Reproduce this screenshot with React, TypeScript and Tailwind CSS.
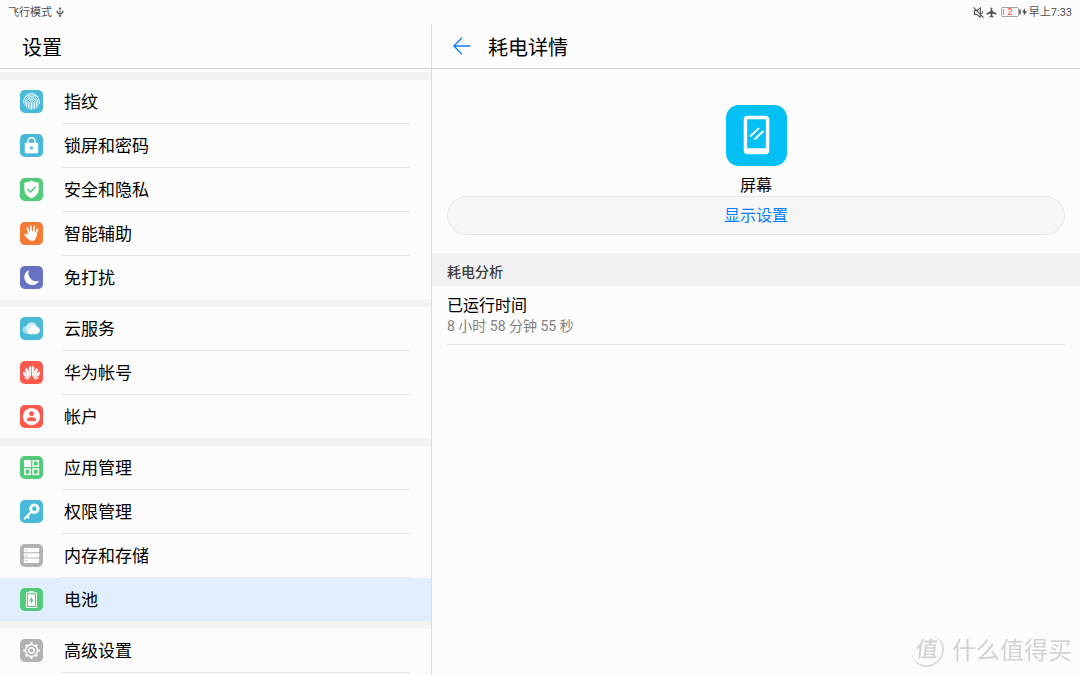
import { useState } from "react";
import type { ReactNode } from "react";

interface Item {
  label: string;
  color: string;
  icon: ReactNode;
}

const groups: Item[][] = [
  [
    { label: "指纹", color: "#48bad8", icon: <Fingerprint /> },
    { label: "锁屏和密码", color: "#48bad8", icon: <Lock /> },
    { label: "安全和隐私", color: "#50cb79", icon: <Shield /> },
    { label: "智能辅助", color: "#f57a34", icon: <Hand /> },
    { label: "免打扰", color: "#6772c3", icon: <Moon /> },
  ],
  [
    { label: "云服务", color: "#48bad8", icon: <Cloud /> },
    { label: "华为帐号", color: "#fd5a4e", icon: <Flower /> },
    { label: "帐户", color: "#fd5a4e", icon: <Account /> },
  ],
  [
    { label: "应用管理", color: "#50cb79", icon: <Apps /> },
    { label: "权限管理", color: "#48bad8", icon: <Key /> },
    { label: "内存和存储", color: "#b2b2b2", icon: <Storage /> },
    { label: "电池", color: "#50cb79", icon: <Battery /> },
  ],
  [{ label: "高级设置", color: "#b2b2b2", icon: <Gear /> }],
];

function Fingerprint() {
  return (
    <g fill="none" stroke="#fff" strokeWidth="0.9" strokeLinecap="round">
      <path d="M5.2 7.4C6.6 5 9 3.6 12 3.6s5.4 1.4 6.8 3.8" />
      <path d="M3.8 13.5v-1.6C4 8 7.6 5.2 12 5.2S20 8 20.2 11.9v2.2" />
      <path d="M5.4 16v-4c.2-3 3-5.2 6.6-5.2s6.4 2.2 6.600 5.2v4.8" />
      <path d="M7 17.8V12.2c.2-2.2 2.3-3.8 5-3.8s4.8 1.6 5 3.8v6" />
      <path d="M8.7 19v-6.6c.2-1.4 1.5-2.4 3.3-2.4s3.1 1 3.3 2.4v6.8" />
      <path d="M10.4 19.8v-6.900c0-.8.7-1.300 1.600-1.300s1.600.5 1.600 1.300v7" />
      <path d="M12 13.400v6.800" />
    </g>
  );
}

function Lock() {
  return (
    <>
      <path d="M8.3 9.5V7.6a3.7 3.7 0 0 1 7.4 0v1.900" fill="none" stroke="#fff" strokeWidth="1.5" />
      <rect x="5" y="9" width="14" height="11" rx="1" fill="#fff" />
      <circle cx="12" cy="14.4" r="1.7" fill="#48bad8" />
    </>
  );
}

function Shield() {
  return (
    <>
      <path d="M12 2.7c2 1.3 4.6 2 7.5 2.2v6.6c0 4.600-3 7.700-7.500 9.800-4.500-2.100-7.500-5.200-7.500-9.800V4.900C7.400 4.700 10 4 12 2.700z" fill="#fff" />
      <path d="m7.7 11.5 3.2 3.2 5.6-5.6" fill="none" stroke="#50cb79" strokeWidth="1.5" />
    </>
  );
}

function Hand() {
  return (
    <g stroke="#fff" strokeLinecap="round" fill="#fff">
      <path d="M9.3 11.5 7.7 6.200M11.700 10.500l-.6-6.100M14.300 10.500l.6-5.700M16.600 12l1.700-4.400" strokeWidth="1.8" />
      <path d="M8.6 10.800c3-.9 6.300-.7 8.800.4-.2 2.500-.7 4.700-1.900 6.700-.9 1.500-3.500 1.800-5.200.6-1.800-1.300-3.700-3-5.300-4.700-.5-.7.200-1.300 1-1.100l2.800 1.200z" strokeWidth="1" strokeLinejoin="round" />
    </g>
  );
}

function Moon() {
  return <path d="M9.500 4.100A8.200 8.200 0 1 0 20 15.400 8.400 8.400 0 0 1 9.500 4.100z" fill="#fff" />;
}

function Cloud() {
  return (
    <>
      <path d="M7 17.500a4 4 0 0 1-.3-8 5.600 5.600 0 0 1 10.600-.8v8.800z" fill="#a5dcea" />
      <circle cx="12" cy="11.800" r="5.500" fill="#d9f0f6" />
      <path d="M10.500 17.900a2.600 2.600 0 0 1 .2-5.200 5 5 0 0 1 5-3c3 0 5 1.900 5 4.200 0 2.300-1.800 4-4.200 4z" fill="#fff" />
    </>
  );
}

function Flower() {
  return (
    <g fill="#fff">
      <path d="M11.500 16.800C9.300 13 8.600 8 9.600 6c.9-1.100 2-.6 2.100.8z" />
      <path d="M12.500 16.800c2.200-3.800 2.900-8.800 1.900-10.800-.9-1.100-2-.6-2.100.8z" />
      <path d="M10.700 17.200C7 14.600 5 10.500 5.600 8.500c.7-1.300 1.900-.9 2.500.3 1.100 2.300 2.200 5.300 2.600 8.400z" />
      <path d="M13.300 17.200c3.700-2.600 5.700-6.700 5.100-8.700-.7-1.300-1.900-.9-2.500.3-1.100 2.300-2.200 5.300-2.600 8.400z" />
      <path d="M10.100 17.900C6 17.300 2.800 14.500 3 12.300c.4-1.300 1.400-1.200 2.300-.4 1.900 1.700 3.600 3.700 4.800 6z" />
      <path d="M13.900 17.900c4.100-.6 7.300-3.400 7.100-5.600-.4-1.300-1.400-1.200-2.300-.4-1.900 1.700-3.600 3.700-4.800 6z" />
      <path d="M9.900 18.600c-2.600 1.300-4.900.3-5.500-1.800 2 .2 3.800.8 5.500 1.800z" />
      <path d="M14.100 18.600c2.600 1.300 4.900.3 5.500-1.800-2 .2-3.800.8-5.500 1.800z" />
    </g>
  );
}

function Account() {
  return (
    <>
      <circle cx="12" cy="12" r="9" fill="#fff" />
      <circle cx="12" cy="9.200" r="2.600" fill="#fd5a4e" />
      <path d="M7.300 16.700v-1.300c0-1.700 1.500-2.700 3-2.700h3.400c1.500 0 3 1 3 2.700v1.300z" fill="#fd5a4e" />
    </>
  );
}

function Apps() {
  return (
    <>
      <rect x="4.2" y="4.2" width="7.4" height="7.4" rx="0.6" fill="#fff" />
      <g fill="none" stroke="#fff" strokeWidth="1.5">
        <rect x="13.6" y="5" width="5.6" height="5.6" />
        <rect x="5" y="13.6" width="5.6" height="5.6" />
        <rect x="13.6" y="13.6" width="5.6" height="5.6" />
      </g>
    </>
  );
}

function Key() {
  return (
    <g fill="none" stroke="#fff" strokeLinecap="round">
      <circle cx="15" cy="9" r="3.9" strokeWidth="3" />
      <path d="m12 12.300-7 7M7.800 17.300l1 1" strokeWidth="2.2" />
    </g>
  );
}

function Storage() {
  return (
    <>
      {[4.2, 9.7, 15.2].map((y) => (
        <g key={y}>
          <rect x="4" y={y} width="16" height="4.5" rx="0.8" fill="#fff" />
          <rect x="6" y={y + 1.5} width="1.5" height="1.5" fill="#b2b2b2" />
        </g>
      ))}
    </>
  );
}

function Battery() {
  return (
    <>
      <path d="M9.700 3h4.600v1.600h-4.600z" fill="#fff" />
      <rect x="6.7" y="5" width="10.6" height="15.3" fill="none" stroke="#fff" />
      <rect x="8.3" y="6.6" width="7.4" height="12.1" fill="#fff" />
      <path d="m12.700 8.800-3.200 4.600h2l-.3 3.400 3.300-4.700h-2.100z" fill="#50cb79" />
    </>
  );
}

function Gear() {
  return (
    <g fill="none" stroke="#fff">
      <circle cx="12" cy="12" r="6.3" strokeWidth="1.5" />
      <circle cx="12" cy="12" r="2.9" strokeWidth="1.5" />
      <path
        d="M12 5.500v-2M12 20.500v-2M5.500 12h-2M20.500 12h-2M7.400 7.400 6 6M18 18l-1.400-1.400M16.600 7.400 18 6M6 18l1.400-1.400"
        strokeWidth="2.2"
      />
    </g>
  );
}

function StatusBar() {
  return (
    <div className="flex h-6 shrink-0 items-center justify-between px-2 text-[11px] text-[#505050]">
      <div className="flex items-center gap-1">
        <span className="pt-0.5">飞行模式</span>
        <svg width="8" height="10" viewBox="0 0 8 12" fill="#505050" aria-label="USB">
          <path d="M4 0 2.300 2.500h1.200v5L1.500 6V4.600H0V7l3.500 2v.6a1.200 1.200 0 1 0 1 0V9L8 7V4.600H6.500V6l-2 1.500v-5h1.200z" />
        </svg>
      </div>
      <div className="flex items-center">
        <svg className="mr-0.5" width="11" height="11" viewBox="0 0 12 12" fill="none" stroke="#505050" aria-label="静音">
          <path d="M1.500 4v4h2L8 11V1L4.500 3.700z" strokeWidth="1.200" />
          <path d="M.5.500l11 11M10 4.500v3" strokeWidth="1.200" />
        </svg>
        <svg className="mr-1" width="11" height="11" viewBox="0 0 12 12" fill="#505050" aria-label="飞行模式">
          <path d="M6 .5c.6 0 .9.500.9 1.200v2.600l4.600 2.900v1.200L6.900 7v2.600l1.400 1v.9L6 10.900l-2.300.6v-.9l1.400-1V7L.5 8.400V7.200l4.600-2.900V1.700C5.100 1 5.400.5 6 .5z" />
        </svg>
        <svg width="20" height="12" viewBox="0 0 20 12" aria-label="电量 2">
          <rect x="0.5" y="1.5" width="17" height="9" rx="1" fill="none" stroke="#a0a0a0" />
          <path d="M2.500 3v6" stroke="#36d36a" />
          <path d="M19 3.500v5" stroke="#505050" strokeWidth="1.500" />
          <text x="9" y="9.2" fontSize="9" textAnchor="middle" fill="#ff3b30">
            2
          </text>
        </svg>
        <svg className="mr-0.5 ml-px" width="5" height="8" viewBox="0 0 5 8" fill="#505050" aria-label="充电中">
          <path d="M3.200 0 0 4.600h2L1.700 8 5 3.300H3z" />
        </svg>
        <span className="pt-0.5">早上7:33</span>
      </div>
    </div>
  );
}

function Watermark() {
  return (
    <div className="pointer-events-none fixed right-2 bottom-2 flex items-center gap-2 text-[#d2d2d2]">
      <span className="flex size-8 items-center justify-center rounded-full border-r-2 border-b-2 border-[#dadada] text-[22px] leading-8 font-medium -skew-x-6">
        值
      </span>
      <span className="text-2xl leading-8">什么值得买</span>
    </div>
  );
}

export default function App() {
  const [selected, setSelected] = useState("电池");

  return (
    <div className="flex h-screen flex-col overflow-hidden bg-[#fcfcfc] font-['Roboto','Noto_Sans_CJK_SC',sans-serif] text-black">
      <StatusBar />
      <div className="flex min-h-0 flex-1">
        <aside className="flex w-2/5 shrink-0 flex-col border-r border-[#dcdcdc]">
          <header className="shrink-0 border-b border-[#d8d8d8] px-[22px]">
            <h1 className="pt-1 text-[20px] leading-10">设置</h1>
          </header>
          <nav className="min-h-0 flex-1 overflow-hidden pt-[3px]">
            {groups.map((items) => (
              <ul key={items[0].label} className="border-t-8 border-[#f2f2f2]">
                {items.map((item, i) => (
                  <li key={item.label}>
                    <button
                      onClick={() => setSelected(item.label)}
                      className={`flex h-[43px] w-full items-center gap-[21px] pl-5 text-left text-[17px] ${
                        selected === item.label ? "bg-[#e1eefb]" : ""
                      }`}
                    >
                      <svg width="23" height="23" viewBox="0 0 24 24" aria-hidden="true">
                        <rect width="24" height="24" rx="5" fill={item.color} />
                        {item.icon}
                      </svg>
                      <span className="pt-[3px]">{item.label}</span>
                    </button>
                    {(i < items.length - 1 || items.length === 1) && (
                      <div className="mr-[21px] ml-[61px] h-px bg-[#e8e8e8]" />
                    )}
                  </li>
                ))}
              </ul>
            ))}
          </nav>
        </aside>

        <main className="min-w-0 flex-1">
          <header className="flex items-center gap-4 border-b border-[#d8d8d8] px-5">
            <button aria-label="返回">
              <svg width="20" height="20" viewBox="0 0 20 20" fill="none" stroke="#0a7dfa" strokeWidth="1.300">
                <path d="M18.500 10H2.200M10 1.800 1.800 10l8.200 8.200" />
              </svg>
            </button>
            <h2 className="pt-1 text-[20px] leading-10">耗电详情</h2>
          </header>

          <section className="flex flex-col items-center px-[15px] pt-9">
            <svg width="61" height="61" viewBox="0 0 62 62" aria-hidden="true">
              <rect width="62" height="62" rx="13" fill="#04c0f4" />
              <path
                fillRule="evenodd"
                d="M22 11h18a4 4 0 0 1 4 4v31a4 4 0 0 1-4 4H22a4 4 0 0 1-4-4V15a4 4 0 0 1 4-4zm-.5 3.500v29.500h19V14.500z"
                fill="#fff"
              />
              <path d="m24.500 32 9-8.500M29 35l9-8.500" stroke="#fff" strokeWidth="2" />
            </svg>
            <div className="pt-2.5 text-base leading-5">屏幕</div>
            <button className="h-[39px] w-full rounded-full border border-[#e6e6e6] bg-[#f6f6f6] text-base text-[#0a7dfa]">
              显示设置
            </button>
          </section>

          <h3 className="mt-[18px] bg-[#f2f2f2] px-[15px] pt-2.5 pb-1 text-sm leading-[19px] font-medium text-[#404040]">
            耗电分析
          </h3>
          <div className="mx-[15px] border-b border-[#e8e8e8] py-2">
            <div className="pt-0.5 text-base leading-5">已运行时间</div>
            <div className="text-sm text-[#808080]">8 小时 58 分钟 55 秒</div>
          </div>
        </main>
      </div>
      <Watermark />
    </div>
  );
}
